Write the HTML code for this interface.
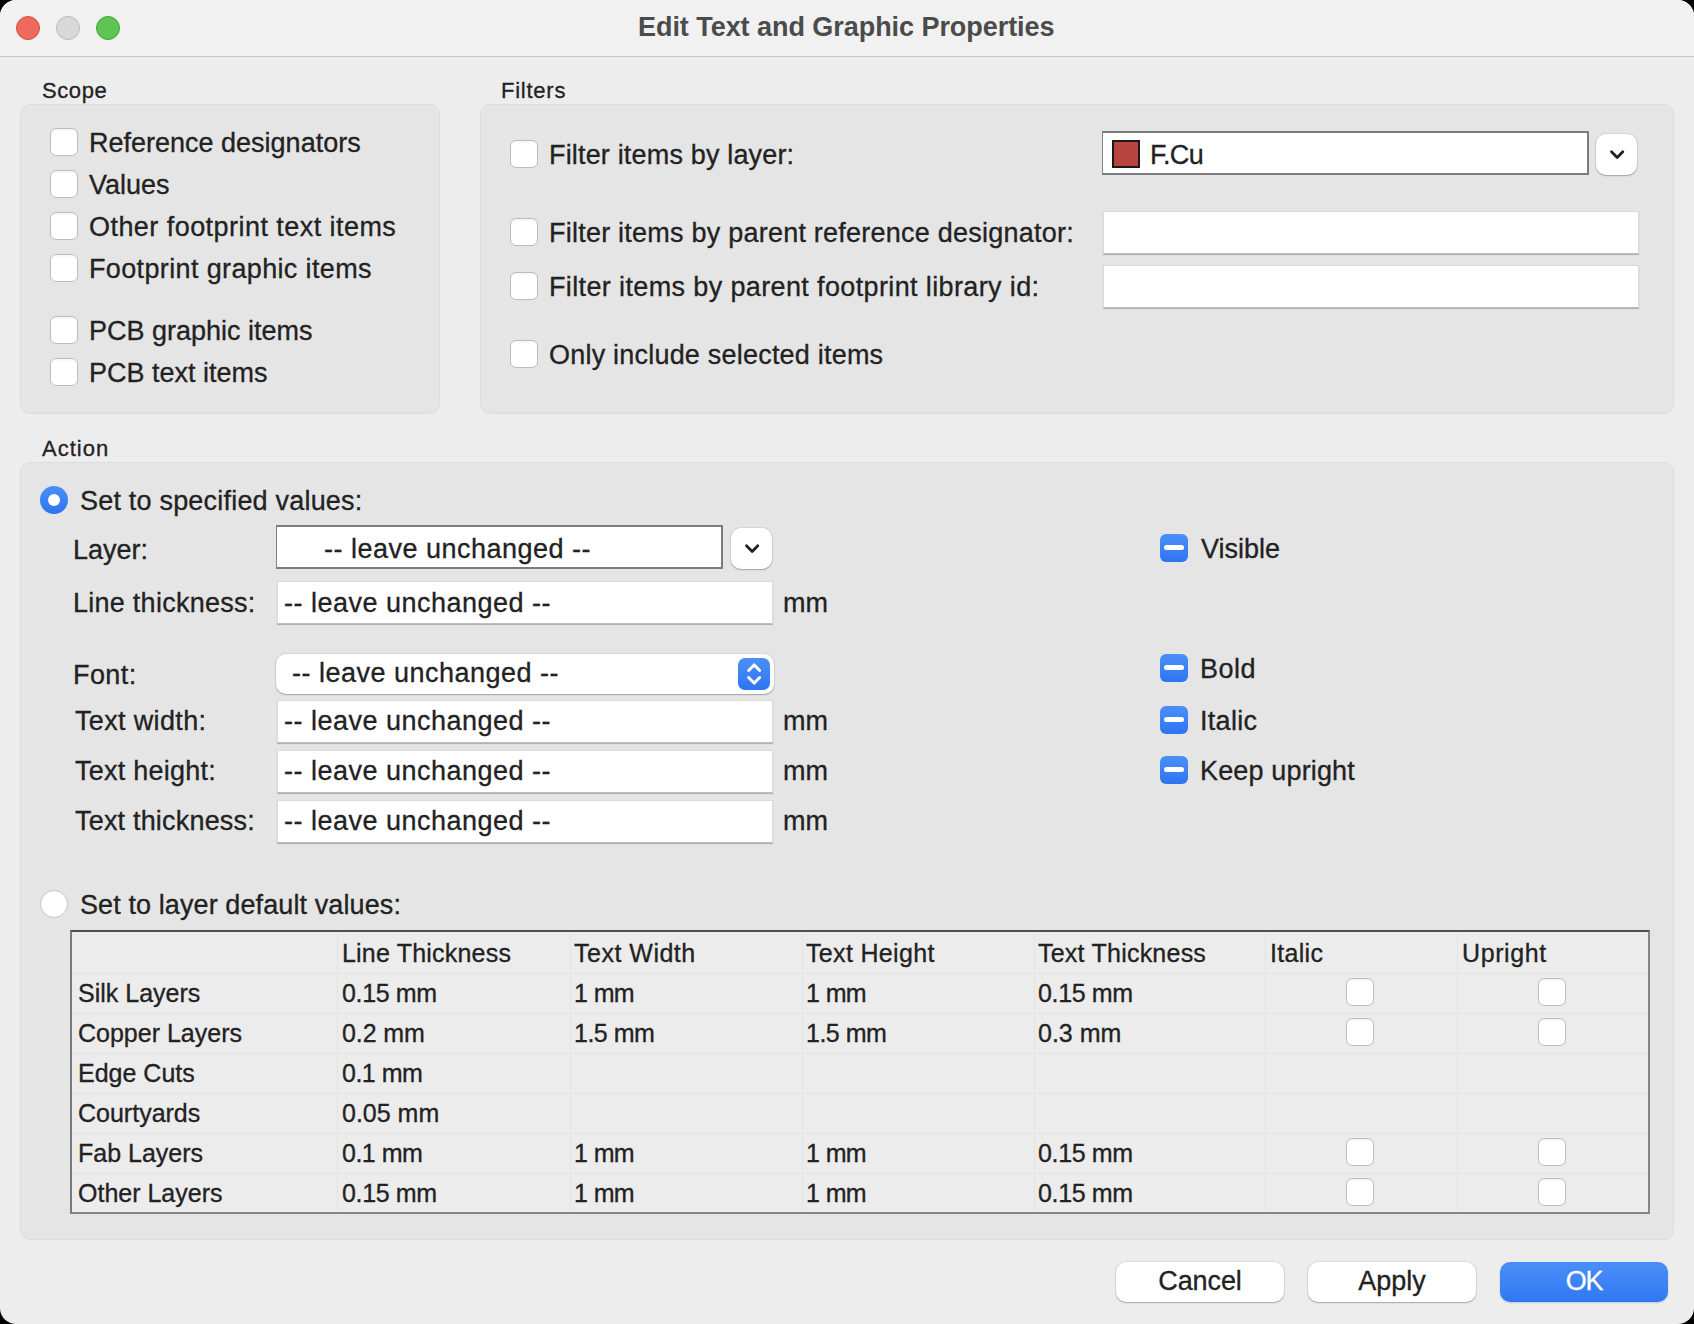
<!DOCTYPE html>
<html><head><meta charset="utf-8">
<style>
*{box-sizing:border-box;margin:0;padding:0}
html,body{width:1694px;height:1324px;overflow:hidden;background:#000}
body{font-family:"Liberation Sans",sans-serif;color:#222;-webkit-text-stroke:0.3px currentColor}
.win{position:absolute;left:0;top:0;width:1694px;height:1324px;border-radius:16px;background:#ededed;overflow:hidden}
.tb{position:absolute;left:0;top:0;width:1694px;height:57px;background:#f1f1f1;border-bottom:1px solid #c8c8c8}
.tl{position:absolute;top:16px;width:24px;height:24px;border-radius:50%}
.t{position:absolute;font-size:27px;line-height:30px;white-space:pre}
.ts{position:absolute;font-size:22px;line-height:30px;white-space:pre;letter-spacing:0.6px}
.tg{position:absolute;font-size:25px;line-height:30px;white-space:pre}
.grp{position:absolute;background:#e5e5e5;border:1px solid #dddddd;border-radius:10px}
.cb{position:absolute;width:28px;height:28px;border-radius:6px;background:#fff;border:1px solid #bcbcbc;box-shadow:inset 0 2px 2px rgba(0,0,0,0.035)}
.tri{position:absolute;width:28px;height:28px;border-radius:6px;background:linear-gradient(#4b90f8,#2f74f1)}
.tri:after{content:"";position:absolute;left:4px;top:11px;width:20px;height:5px;border-radius:2.5px;background:#fff}
.inp{position:absolute;background:#fff;border:1px solid #dadada;border-bottom-color:#bdbdbd;box-shadow:0 1px 0.8px rgba(0,0,0,0.22)}
.combo{position:absolute;background:#fff;border:2px solid #7c7c7c;border-left:1px solid #858585}
.dd{position:absolute;width:41px;height:41px;border-radius:10px;background:#fff;box-shadow:0 0 0 1px rgba(0,0,0,0.06),0 1px 1.5px rgba(0,0,0,0.25)}
.dd svg{position:absolute;left:0;top:0}
.btn{position:absolute;height:40px;width:168px;border-radius:10px;background:#fff;box-shadow:0 0 0 1px rgba(0,0,0,0.07),0 1px 1.5px rgba(0,0,0,0.25)}
.grid{position:absolute;left:70px;top:930px;width:1580px;height:284px;background:#ececec;border-top:2px solid #4f4f4f;border-left:2px solid #7a7a7a;border-right:2px solid #858585;border-bottom:2px solid #858585}
.hl{position:absolute;height:1px;background:#e4e4e4}
.vl{position:absolute;width:1px;background:#e4e4e4}
</style></head><body>
<div class="win">
  <div class="tb"></div>
  <div class="tl" style="left:16px;background:#ee6a5e;border:1px solid #dc4b41"></div>
  <div class="tl" style="left:56px;background:#d8d8d8;border:1px solid #b9b9b9"></div>
  <div class="tl" style="left:96px;background:#5fc454;border:1px solid #41a537"></div>
  <div class="t" style="left:638px;top:12px;font-weight:bold;color:#4b4b4b;-webkit-text-stroke:0;letter-spacing:-0.05px">Edit Text and Graphic Properties</div>

  <!-- Scope -->
  <div class="ts" style="left:42px;top:76px">Scope</div>
  <div class="grp" style="left:20px;top:104px;width:420px;height:310px"></div>
  <div class="cb" style="left:50px;top:128px"></div><div class="t" style="left:89px;top:128px">Reference designators</div>
  <div class="cb" style="left:50px;top:170px"></div><div class="t" style="left:89px;top:170px">Values</div>
  <div class="cb" style="left:50px;top:212px"></div><div class="t" style="left:89px;top:212px;letter-spacing:0.45px">Other footprint text items</div>
  <div class="cb" style="left:50px;top:254px"></div><div class="t" style="left:89px;top:254px;letter-spacing:0.36px">Footprint graphic items</div>
  <div class="cb" style="left:50px;top:316px"></div><div class="t" style="left:89px;top:316px">PCB graphic items</div>
  <div class="cb" style="left:50px;top:358px"></div><div class="t" style="left:89px;top:358px">PCB text items</div>

  <!-- Filters -->
  <div class="ts" style="left:501px;top:76px;letter-spacing:0.75px">Filters</div>
  <div class="grp" style="left:480px;top:104px;width:1194px;height:310px"></div>
  <div class="cb" style="left:510px;top:140px"></div><div class="t" style="left:549px;top:140px;letter-spacing:0.17px">Filter items by layer:</div>
  <div class="cb" style="left:510px;top:218px"></div><div class="t" style="left:549px;top:218px;letter-spacing:0.23px">Filter items by parent reference designator:</div>
  <div class="cb" style="left:510px;top:272px"></div><div class="t" style="left:549px;top:272px;letter-spacing:0.37px">Filter items by parent footprint library id:</div>
  <div class="cb" style="left:510px;top:340px"></div><div class="t" style="left:549px;top:340px;letter-spacing:0.21px">Only include selected items</div>
  <div class="combo" style="left:1102px;top:131px;width:487px;height:44px"></div>
  <div style="position:absolute;left:1112px;top:140px;width:28px;height:28px;background:#b9433f;border:2px solid #1a1a1a"></div>
  <div class="t" style="left:1150px;top:140px;letter-spacing:-0.6px">F.Cu</div>
  <div class="dd" style="left:1596px;top:134px"><svg width="41" height="41"><path d="M15.5 17.7 L21.2 23.4 L26.8 17.7" fill="none" stroke="#1f1f1f" stroke-width="2.8" stroke-linecap="round" stroke-linejoin="round"/></svg></div>
  <div class="inp" style="left:1103px;top:211px;width:536px;height:43px"></div>
  <div class="inp" style="left:1103px;top:265px;width:536px;height:43px"></div>

  <!-- Action -->
  <div class="ts" style="left:42px;top:434px;letter-spacing:1px">Action</div>
  <div class="grp" style="left:20px;top:462px;width:1654px;height:778px"></div>
  <div style="position:absolute;left:40px;top:486px;width:28px;height:28px;border-radius:50%;background:linear-gradient(#4b90f8,#2f74f1)"></div>
  <div style="position:absolute;left:48px;top:494px;width:12px;height:12px;border-radius:50%;background:#fff"></div>
  <div class="t" style="left:80px;top:486px;letter-spacing:0.2px">Set to specified values:</div>

  <div class="t" style="left:73px;top:535px">Layer:</div>
  <div class="combo" style="left:276px;top:525px;width:447px;height:44px"></div>
  <div class="t" style="left:324px;top:534px;letter-spacing:0.49px">-- leave unchanged --</div>
  <div class="dd" style="left:731px;top:528px"><svg width="41" height="41"><path d="M15.5 17.7 L21.2 23.4 L26.8 17.7" fill="none" stroke="#1f1f1f" stroke-width="2.8" stroke-linecap="round" stroke-linejoin="round"/></svg></div>

  <div class="t" style="left:73px;top:588px;letter-spacing:0.26px">Line thickness:</div>
  <div class="inp" style="left:277px;top:581px;width:496px;height:43px"></div>
  <div class="t" style="left:284px;top:588px;letter-spacing:0.49px">-- leave unchanged --</div>
  <div class="t" style="left:783px;top:588px">mm</div>

  <div class="t" style="left:73px;top:660px;letter-spacing:0.4px">Font:</div>
  <div style="position:absolute;left:276px;top:654px;width:498px;height:40px;border-radius:10px;background:#fff;box-shadow:0 0 0 1px rgba(0,0,0,0.06),0 1px 1.5px rgba(0,0,0,0.25)"></div>
  <div class="t" style="left:292px;top:658px;letter-spacing:0.49px">-- leave unchanged --</div>
  <div style="position:absolute;left:738px;top:658px;width:32px;height:32px;border-radius:7px;background:linear-gradient(#4b90f8,#2f74f1)"><svg width="32" height="32" style="position:absolute;left:0;top:0"><path d="M10.6 12.5 L16.1 6.9 L21.7 12.5 M10.6 19.5 L16.1 25.1 L21.7 19.5" fill="none" stroke="#fff" stroke-width="2.9" stroke-linecap="round" stroke-linejoin="round"/></svg></div>

  <div class="t" style="left:75px;top:706px;letter-spacing:0.35px">Text width:</div>
  <div class="inp" style="left:277px;top:700px;width:496px;height:43px"></div>
  <div class="t" style="left:284px;top:706px;letter-spacing:0.49px">-- leave unchanged --</div>
  <div class="t" style="left:783px;top:706px">mm</div>

  <div class="t" style="left:75px;top:756px;letter-spacing:0.24px">Text height:</div>
  <div class="inp" style="left:277px;top:750px;width:496px;height:43px"></div>
  <div class="t" style="left:284px;top:756px;letter-spacing:0.49px">-- leave unchanged --</div>
  <div class="t" style="left:783px;top:756px">mm</div>

  <div class="t" style="left:75px;top:806px;letter-spacing:0.19px">Text thickness:</div>
  <div class="inp" style="left:277px;top:800px;width:496px;height:43px"></div>
  <div class="t" style="left:284px;top:806px;letter-spacing:0.49px">-- leave unchanged --</div>
  <div class="t" style="left:783px;top:806px">mm</div>

  <div class="tri" style="left:1160px;top:534px"></div><div class="t" style="left:1201px;top:534px">Visible</div>
  <div class="tri" style="left:1160px;top:654px"></div><div class="t" style="left:1200px;top:654px;letter-spacing:0.5px">Bold</div>
  <div class="tri" style="left:1160px;top:706px"></div><div class="t" style="left:1200px;top:706px;letter-spacing:0.3px">Italic</div>
  <div class="tri" style="left:1160px;top:756px"></div><div class="t" style="left:1200px;top:756px;letter-spacing:0.15px">Keep upright</div>

  <div style="position:absolute;left:40px;top:890px;width:28px;height:28px;border-radius:50%;background:#fff;border:1px solid #c4c4c4"></div>
  <div class="t" style="left:80px;top:890px;letter-spacing:0.1px">Set to layer default values:</div>

  <div class="grid"></div>
  <div class="hl" style="left:72px;top:973px;width:1576px"></div>
  <div class="hl" style="left:72px;top:1013px;width:1576px"></div>
  <div class="hl" style="left:72px;top:1053px;width:1576px"></div>
  <div class="hl" style="left:72px;top:1093px;width:1576px"></div>
  <div class="hl" style="left:72px;top:1133px;width:1576px"></div>
  <div class="hl" style="left:72px;top:1173px;width:1576px"></div>
  <div class="vl" style="left:337px;top:932px;height:280px"></div>
  <div class="vl" style="left:570px;top:932px;height:280px"></div>
  <div class="vl" style="left:802px;top:932px;height:280px"></div>
  <div class="vl" style="left:1034px;top:932px;height:280px"></div>
  <div class="vl" style="left:1265px;top:932px;height:280px"></div>
  <div class="vl" style="left:1457px;top:932px;height:280px"></div>

  <div class="tg" style="left:342px;top:938px;letter-spacing:0.2px">Line Thickness</div>
  <div class="tg" style="left:574px;top:938px;letter-spacing:0.5px">Text Width</div>
  <div class="tg" style="left:806px;top:938px;letter-spacing:0.33px">Text Height</div>
  <div class="tg" style="left:1038px;top:938px;letter-spacing:0.23px">Text Thickness</div>
  <div class="tg" style="left:1270px;top:938px;letter-spacing:0.3px">Italic</div>
  <div class="tg" style="left:1462px;top:938px;letter-spacing:0.6px">Upright</div>

  <div class="tg" style="left:78px;top:978px">Silk Layers</div>
  <div class="tg" style="left:342px;top:978px;letter-spacing:-0.35px">0.15 mm</div><div class="tg" style="left:574px;top:978px;letter-spacing:-0.6px">1 mm</div><div class="tg" style="left:806px;top:978px;letter-spacing:-0.6px">1 mm</div><div class="tg" style="left:1038px;top:978px;letter-spacing:-0.35px">0.15 mm</div>
  <div class="cb" style="left:1346px;top:978px"></div><div class="cb" style="left:1538px;top:978px"></div>

  <div class="tg" style="left:78px;top:1018px">Copper Layers</div>
  <div class="tg" style="left:342px;top:1018px;letter-spacing:-0.1px">0.2 mm</div><div class="tg" style="left:574px;top:1018px;letter-spacing:-0.5px">1.5 mm</div><div class="tg" style="left:806px;top:1018px;letter-spacing:-0.5px">1.5 mm</div><div class="tg" style="left:1038px;top:1018px">0.3 mm</div>
  <div class="cb" style="left:1346px;top:1018px"></div><div class="cb" style="left:1538px;top:1018px"></div>

  <div class="tg" style="left:78px;top:1058px">Edge Cuts</div>
  <div class="tg" style="left:342px;top:1058px;letter-spacing:-0.5px">0.1 mm</div>

  <div class="tg" style="left:78px;top:1098px">Courtyards</div>
  <div class="tg" style="left:342px;top:1098px">0.05 mm</div>

  <div class="tg" style="left:78px;top:1138px">Fab Layers</div>
  <div class="tg" style="left:342px;top:1138px;letter-spacing:-0.5px">0.1 mm</div><div class="tg" style="left:574px;top:1138px;letter-spacing:-0.6px">1 mm</div><div class="tg" style="left:806px;top:1138px;letter-spacing:-0.6px">1 mm</div><div class="tg" style="left:1038px;top:1138px;letter-spacing:-0.35px">0.15 mm</div>
  <div class="cb" style="left:1346px;top:1138px"></div><div class="cb" style="left:1538px;top:1138px"></div>

  <div class="tg" style="left:78px;top:1178px">Other Layers</div>
  <div class="tg" style="left:342px;top:1178px;letter-spacing:-0.35px">0.15 mm</div><div class="tg" style="left:574px;top:1178px;letter-spacing:-0.6px">1 mm</div><div class="tg" style="left:806px;top:1178px;letter-spacing:-0.6px">1 mm</div><div class="tg" style="left:1038px;top:1178px;letter-spacing:-0.35px">0.15 mm</div>
  <div class="cb" style="left:1346px;top:1178px"></div><div class="cb" style="left:1538px;top:1178px"></div>

  <!-- Buttons -->
  <div class="btn" style="left:1116px;top:1262px"></div><div class="t" style="left:1116px;top:1266px;width:168px;text-align:center;letter-spacing:-0.1px">Cancel</div>
  <div class="btn" style="left:1308px;top:1262px"></div><div class="t" style="left:1308px;top:1266px;width:168px;text-align:center">Apply</div>
  <div class="btn" style="left:1500px;top:1262px;background:linear-gradient(#4a8ff8,#3077f0);box-shadow:0 1px 2px rgba(30,90,220,0.25)"></div><div class="t" style="left:1500px;top:1266px;width:168px;text-align:center;color:#fff;letter-spacing:-1.2px">OK</div>
</div>
</body></html>
